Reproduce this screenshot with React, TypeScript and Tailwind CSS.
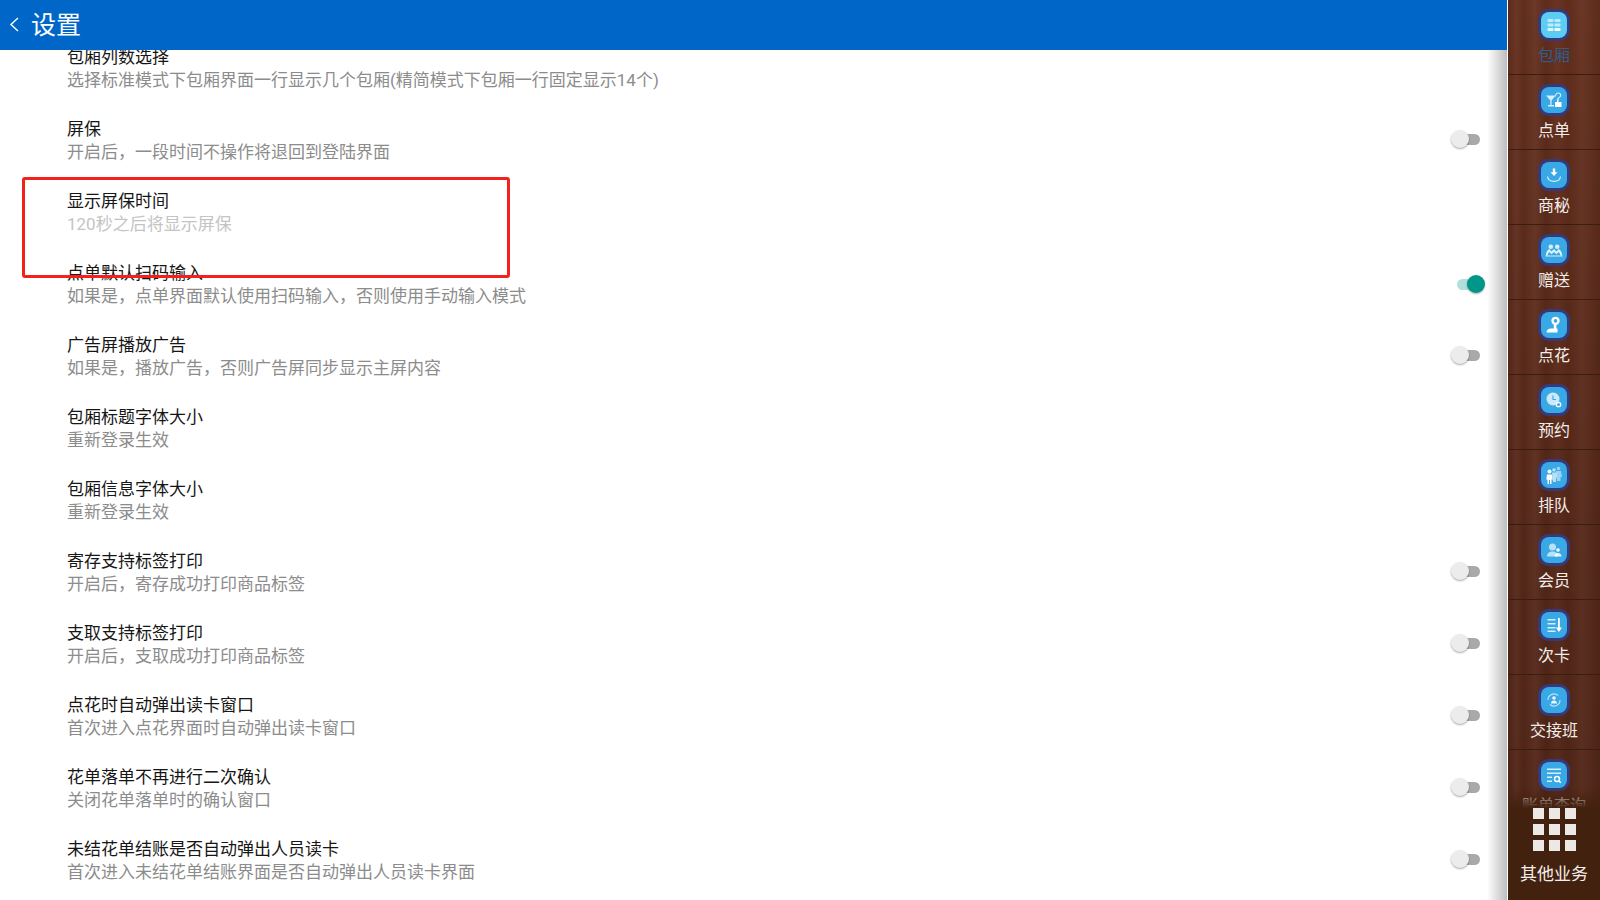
const rows = [
  { title: "包厢列数选择", desc: "选择标准模式下包厢界面一行显示几个包厢(精简模式下包厢一行固定显示14个)" },
  { title: "屏保", desc: "开启后，一段时间不操作将退回到登陆界面", sw: "off" },
  { title: "显示屏保时间", desc: "120秒之后将显示屏保", muted: true },
  { title: "点单默认扫码输入", desc: "如果是，点单界面默认使用扫码输入，否则使用手动输入模式", sw: "on" },
  { title: "广告屏播放广告", desc: "如果是，播放广告，否则广告屏同步显示主屏内容", sw: "off" },
  { title: "包厢标题字体大小", desc: "重新登录生效" },
  { title: "包厢信息字体大小", desc: "重新登录生效" },
  { title: "寄存支持标签打印", desc: "开启后，寄存成功打印商品标签", sw: "off" },
  { title: "支取支持标签打印", desc: "开启后，支取成功打印商品标签", sw: "off" },
  { title: "点花时自动弹出读卡窗口", desc: "首次进入点花界面时自动弹出读卡窗口", sw: "off" },
  { title: "花单落单不再进行二次确认", desc: "关闭花单落单时的确认窗口", sw: "off" },
  { title: "未结花单结账是否自动弹出人员读卡", desc: "首次进入未结花单结账界面是否自动弹出人员读卡界面", sw: "off" },
];

const icons: Record<string, React.ReactNode> = {
  grid: (
    <>
      <rect x="4.500" y="5" width="6" height="3" rx="1" opacity=".6" />
      <rect x="11.500" y="5" width="6" height="3" rx="1" opacity=".6" />
      <rect x="4.500" y="9.500" width="6" height="3" rx="1" opacity=".6" />
      <rect x="11.500" y="9.500" width="6" height="3" rx="1" opacity=".6" />
      <rect x="4.500" y="14" width="6" height="3" rx="1" opacity=".8" />
      <rect x="11.500" y="14" width="6" height="3" rx="1" />
    </>
  ),
  drink: (
    <>
      <path d="M3 6.500h9.500l-3.900 5v4.500h2.400v1.500H5v-1.500h2.300v-4.500z" opacity=".8" />
      <path d="M12.500 7.500c0-2.500 1.300-3.500 2.700-3.500s2.500 1 2.500 2.500-1.700 2-2.700 3v1.500" fill="none" stroke="#fff" strokeWidth="1.100" opacity=".8" />
      <path d="M12 13h2v-2.500h1.500V13h3v5H12z" />
    </>
  ),
  download: (
    <>
      <path d="M9.800 4.500h2.400v3.800h2.300L11 12 7.500 8.300h2.300z" />
      <path d="M4.500 12.500c.3 3 3 4.800 6.500 4.800s6.200-1.800 6.500-4.800" fill="none" stroke="#fff" strokeWidth="1.200" opacity=".8" />
    </>
  ),
  gift: (
    <>
      <circle cx="7.800" cy="7.800" r="2.300" opacity=".8" />
      <circle cx="14.200" cy="7.800" r="2.300" opacity=".8" />
      <path d="M2.800 16.500c.3-3 1.500-5.500 3.500-6.500l2.200 2.500L11 10l2.500 2.500 2.200-2.500c2 1 3.200 3.500 3.500 6.500h-1.800c-.3-1.500-.8-2.800-1.700-3.600l-2.200 2.300L11 13l-2.500 2.200-2.200-2.300c-.9.800-1.400 2.100-1.700 3.600z" opacity=".85" />
      <path d="M2.500 16.500h17v1h-17z" opacity=".8" />
    </>
  ),
  flower: (
    <>
      <circle cx="12.500" cy="6.800" r="3" fill="none" stroke="#fff" strokeWidth="2.300" />
      <rect x="10.800" y="9" width="2.600" height="6" />
      <path d="M3.500 18.500c0-2.500 2-4 4.500-4h6.500v4z" />
    </>
  ),
  clock: (
    <>
      <circle cx="10" cy="10" r="6.500" opacity=".75" />
      <path d="M10 6.500v4h3" fill="none" stroke="#38a9e6" strokeWidth="1.200" />
      <circle cx="15.500" cy="15.500" r="2.200" fill="none" stroke="#fff" strokeWidth="1.300" />
    </>
  ),
  queue: (
    <>
      <circle cx="15.500" cy="4.500" r="1.800" opacity=".5" />
      <path d="M13 7h5l1 6h-1.500v4H14z" opacity=".5" />
      <circle cx="11" cy="6" r="1.800" opacity=".65" />
      <path d="M9 8.500h4.500l.5 5h-1v4.500h-3z" opacity=".65" />
      <circle cx="6.500" cy="7.500" r="2" />
      <path d="M4 10.500h5l.7 5H8.500V20H7v-4H6v4H4.500v-4.500H3.300z" />
    </>
  ),
  member: (
    <>
      <circle cx="9.500" cy="8" r="3.500" opacity=".65" />
      <path d="M4 17.500c0-3.500 2.500-5 5.500-5s5.500 1.500 5.500 5z" opacity=".65" />
      <circle cx="15" cy="11" r="1.800" />
      <path d="M11.500 17.500c0-2 1.500-3.500 3.500-3.500s3.500 1.500 3.500 3.500z" opacity=".85" />
    </>
  ),
  card: (
    <>
      <path d="M4.500 5h8v1.500h-8zM4.500 9h8v1.500h-8zM4.500 13h8v1.500h-8zM4.500 16.500h8V18h-8z" opacity=".8" />
      <path d="M15 4h1.800v9.500H19L15.900 18l-3.100-4.500H15z" />
    </>
  ),
  swap: (
    <>
      <path d="M5 11a6 6 0 0 1 10-4.500M17 11a6 6 0 0 1-10 4.500" fill="none" stroke="#fff" strokeWidth="1.100" opacity=".7" />
      <circle cx="11" cy="9" r="1.800" opacity=".9" />
      <path d="M8 14.500c0-2 1.300-3 3-3s3 1 3 3z" opacity=".9" />
    </>
  ),
  search: (
    <>
      <path d="M4 4.500h14V6H4zM4 8.500h14V10H4zM4 12.500h5V14H4zM4 16.500h5V18H4z" opacity=".8" />
      <circle cx="14" cy="15" r="2.500" fill="none" stroke="#fff" strokeWidth="1.500" />
      <path d="M15.800 16.800l2 2" stroke="#fff" strokeWidth="1.500" />
    </>
  ),
};

const navItems = [
  { label: "包厢", icon: "grid", active: true },
  { label: "点单", icon: "drink" },
  { label: "商秘", icon: "download" },
  { label: "赠送", icon: "gift" },
  { label: "点花", icon: "flower" },
  { label: "预约", icon: "clock" },
  { label: "排队", icon: "queue" },
  { label: "会员", icon: "member" },
  { label: "次卡", icon: "card" },
  { label: "交接班", icon: "swap" },
  { label: "账单查询", icon: "search" },
];

function Switch({ on }: { on: boolean }) {
  if (on) {
    return (
      <div className="relative flex h-[18px] w-[35px] items-center">
        <div className="ml-[7px] h-[11px] w-[20px] rounded-l-full bg-[#b2dfdb]" />
        <div className="absolute right-0 top-0 h-[18px] w-[18px] rounded-full bg-[#009688] shadow-[0_1px_2px_rgba(0,0,0,0.35)]" />
      </div>
    );
  }
  return (
    <div className="relative -mt-[2px] flex h-[18px] w-[35px] items-center">
      <div className="ml-[9px] h-[11px] w-[21px] rounded-full bg-[#a9a9a9]" />
      <div className="absolute left-[1px] top-0 h-[18px] w-[18px] rounded-full bg-[#ececec] shadow-[0_1px_2px_rgba(0,0,0,0.35)]" />
    </div>
  );
}

export default function App() {
  return (
    <div className="flex h-[900px] w-[1600px] overflow-hidden bg-white font-['Roboto','Noto_Sans_CJK_SC',sans-serif]">
      <main className="relative w-[1507px] overflow-hidden">
        <header className="relative z-10 flex h-[50px] items-center bg-[#0066c8] text-white">
          <svg width="31" height="50" viewBox="0 0 31 50" fill="none" stroke="white" strokeWidth="1.400">
            <path d="M18 18l-7 6.500 7 6.500" />
          </svg>
          <h1 className="text-[25px] leading-none">设置</h1>
        </header>

        <div className="-mt-[18px]">
          {rows.map((r) => (
            <div key={r.title} className="flex h-[72px] items-center justify-between pl-[67px] pr-[22px]">
              <div className="h-[72px] pt-[13px]">
                <div className="text-[17px] leading-[24px] text-[#161616]">{r.title}</div>
                <div className={r.muted ? "text-[17px] leading-[22px] text-[#c4c4c4]" : "text-[17px] leading-[22px] text-[#8c8c8c]"}>
                  {r.desc}
                </div>
              </div>
              {r.sw && <Switch on={r.sw === "on"} />}
            </div>
          ))}
        </div>

        {/* red annotation */}
        <div className="absolute left-[22px] top-[177px] z-20 h-[101px] w-[488px] rounded-[3px] border-[3px] border-[#f4201c]" />
        {/* sidebar shadow */}
        <div className="absolute bottom-0 right-0 top-[50px] w-[20px] bg-gradient-to-r from-white to-[#bdbdbd]" />
      </main>

      <aside className="relative ml-[1px] w-[92px] overflow-hidden bg-[#66301e] bg-[linear-gradient(90deg,rgba(0,0,0,0.12)_0px,rgba(255,255,255,0.03)_8px,rgba(0,0,0,0.06)_16px,rgba(255,255,255,0.04)_27px,rgba(0,0,0,0.09)_38px,rgba(255,255,255,0.02)_49px,rgba(0,0,0,0.07)_60px,rgba(255,255,255,0.03)_74px,rgba(0,0,0,0.1)_92px),linear-gradient(180deg,rgba(0,0,0,0)_0%,rgba(0,0,0,0.15)_60%,rgba(0,0,0,0.2)_100%)]">
        {navItems.map((n) => (
          <div key={n.label} className="flex h-[75px] flex-col items-center border-b border-[#3b1c10] pt-[9px]">
            <div className="flex h-[32px] w-[32px] items-center justify-center rounded-[11px] bg-[#363a78]">
              <div className={n.active ? "flex h-[26px] w-[26px] items-center justify-center rounded-[8px] bg-[#5bcdf4]" : "flex h-[26px] w-[26px] items-center justify-center rounded-[8px] bg-[#38a9e6]"}>
                <svg width="22" height="22" viewBox="0 0 22 22" fill="white">
                  {icons[n.icon]}
                </svg>
              </div>
            </div>
            <div className={n.active ? "mt-[3px] text-[16px] leading-[24px] text-[#2e5c8c]" : "mt-[3px] text-[16px] leading-[24px] text-[#f4eeea]"}>
              {n.label}
            </div>
          </div>
        ))}

        <div className="absolute bottom-0 left-0 right-0 flex flex-col items-center">
          <div className="h-[20px] w-full bg-gradient-to-b from-transparent to-[#43210f]" />
          <div className="flex h-[92px] w-full flex-col items-center bg-[#43210f]">
            <div className="grid grid-cols-3 gap-[5px]">
              {Array.from({ length: 9 }).map((_, i) => (
                <div key={i} className="h-[11px] w-[11px] bg-[#ece8e6]" />
              ))}
            </div>
            <div className="mt-[11px] text-[17px] leading-[24px] text-[#f4eeea]">其他业务</div>
          </div>
        </div>
      </aside>
    </div>
  );
}
